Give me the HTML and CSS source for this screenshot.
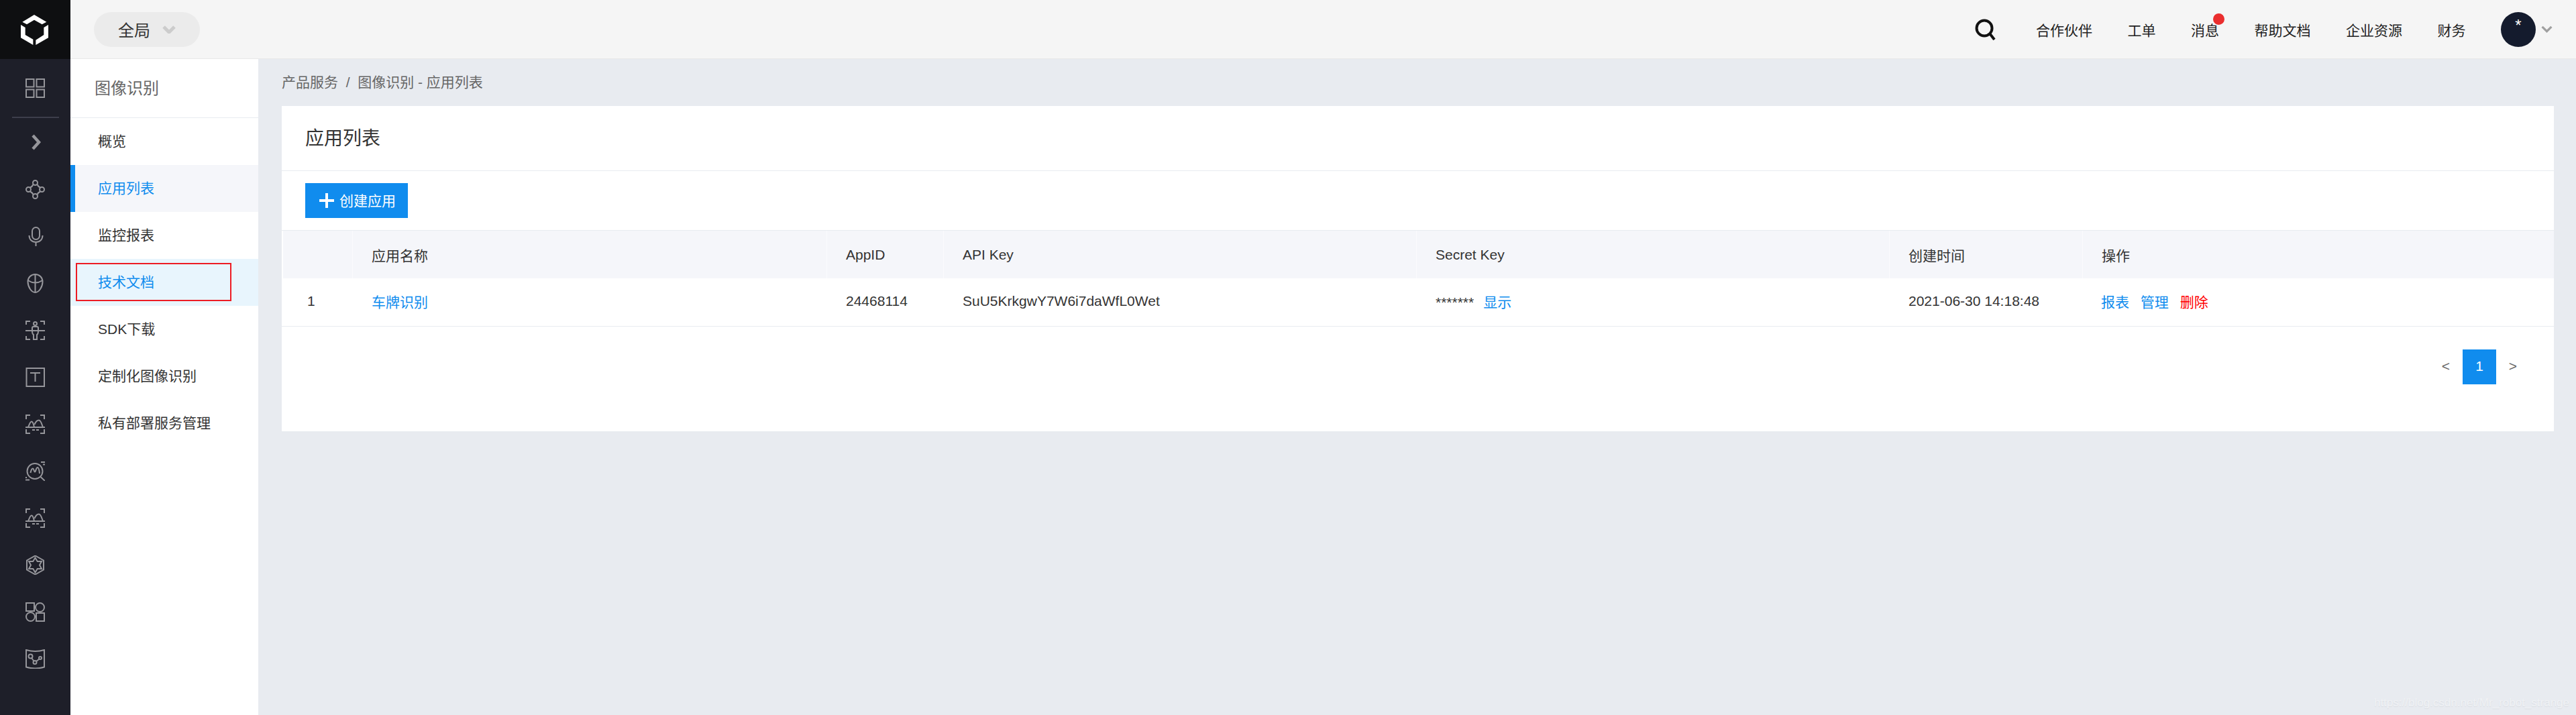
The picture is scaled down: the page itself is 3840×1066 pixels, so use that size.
FILE: index.html
```html
<!DOCTYPE html>
<html lang="zh-CN">
<head>
    <meta charset="utf-8"/>
    <title>图像识别 - 应用列表</title>
    <link rel="stylesheet" href="styles.css">
</head>

<body>
<div class="page">

    <!-- 左侧图标栏 -->
    <aside class="rail">
        <div class="rail-logo">
            <svg class="logo" viewBox="100 65 123 135">
                <polygon points="107,97 160,65 215,97 195,108 160,88 127,108"/>
                <polygon points="100,110 120,122 120,155 155,175 155,200 100,168"/>
                <polygon points="223,110 223,168 167,200 167,178 203,155 203,122"/>
            </svg>
        </div>
        <div class="rail-top">
            <svg class="icon" viewBox="0 0 29 29">
                <rect x="1" y="1" width="11.5" height="11.5"/>
                <rect x="16.5" y="1" width="11.5" height="11.5"/>
                <rect x="1" y="16.5" width="11.5" height="11.5"/>
                <rect x="16.5" y="16.5" width="11.5" height="11.5"/>
            </svg>
        </div>
        <div class="rail-line"></div>
        <div class="rail-arrow">
            <svg class="icon-arrow" viewBox="0 0 14 24">
                <path d="M2 2L11 12L2 22"/>
            </svg>
        </div>
        <div class="rail-item">
            <svg class="icon" viewBox="0 0 29 29">
                <circle cx="14.5" cy="4.5" r="3.5"/>
                <circle cx="4.5" cy="14.5" r="3.5"/>
                <circle cx="24.5" cy="14.5" r="3.5"/>
                <circle cx="14.5" cy="24.5" r="3.5"/>
                <path d="M11.5 7Q10 10.500 7 11.500M17.500 7Q19 10.500 22 11.500M7 17.500Q10 19 11.500 22M22 17.500Q19 19 17.500 22"/>
            </svg>
        </div>
        <div class="rail-item">
            <svg class="icon" viewBox="0 0 29 29">
                <rect x="10" y="1" width="11" height="18" rx="5.500"/>
                <path d="M5.500 13C5.500 19 9.500 23 15.500 23C21.500 23 25.500 19 25.500 13M15.500 23V29"/>
            </svg>
        </div>
        <div class="rail-item">
            <svg class="icon" viewBox="0 0 29 29">
                <path d="M14.500 1C21 1 25.500 6 25.500 12C25.500 20 20 28 14.500 28C9 28 3.500 20 3.500 12C3.500 6 8 1 14.500 1Z"/>
                <path d="M3.500 10Q14.500 17 25.500 10M14.500 1V28"/>
            </svg>
        </div>
        <div class="rail-item">
            <svg class="icon" viewBox="0 0 29 29">
                <path d="M1 6V1H7M22 1H28V6M1 23V28H7M22 28H28V23"/>
                <circle cx="14.500" cy="4.500" r="2.500"/>
                <path d="M0 15H29M10 15V11Q10 9 12 9H17Q19 9 19 11V15M10 15Q10 20 12 21V28H17V21Q19 20 19 15"/>
            </svg>
        </div>
        <div class="rail-item">
            <svg class="icon" viewBox="0 0 29 29">
                <rect x="1.500" y="1" width="26.500" height="27"/>
                <path d="M7 8H22M14.500 8V21"/>
            </svg>
        </div>
        <div class="rail-item">
            <svg class="icon" viewBox="0 0 29 29"><use href="#scan"/></svg>
        </div>
        <div class="rail-item">
            <svg class="icon" viewBox="0 0 29 29">
                <circle cx="14" cy="14.500" r="11.500"/>
                <path d="M22.500 23L29 29M23 1H29M26 4.500H29M0 24H2M0 27.500H6"/>
                <path d="M7.500 17C8.500 12 9.500 10.500 11 10.500C12.500 10.500 12.500 15.500 14 15.500C15.500 15.500 15.500 9 18 9C20 9 20.500 13 21 18"/>
            </svg>
        </div>
        <div class="rail-item">
            <svg class="icon" viewBox="0 0 29 29"><use href="#scan"/></svg>
        </div>
        <div class="rail-item">
            <svg class="icon" viewBox="0 0 29 29">
                <polygon points="14.500,0.500 27,7.500 27,21.500 14.500,28.500 2,21.500 2,7.500"/>
                <polygon points="14.500,3.500 17.750,8.900 24,9 21,14.500 24,20 17.750,20.100 14.500,25.500 11.250,20.100 5,20 8,14.500 5,9 11.250,8.900"/>
            </svg>
        </div>
        <div class="rail-item">
            <svg class="icon" viewBox="0 0 29 29">
                <rect x="1" y="1" width="12" height="12"/>
                <circle cx="21.500" cy="7.500" r="6.500"/>
                <circle cx="7.500" cy="21.500" r="6.500"/>
                <rect x="16" y="16" width="12" height="12"/>
            </svg>
        </div>
        <div class="rail-item">
            <svg class="icon" viewBox="0 0 29 29">
                <path d="M1 1Q14.500 5 28 1V26.500Q14.500 30.500 1 26.500Z"/>
                <circle cx="7.500" cy="10.500" r="3"/>
                <circle cx="14" cy="19.500" r="2.500"/>
                <circle cx="22" cy="13" r="2"/>
                <path d="M9 13L12.500 17.500M16 18L20.500 14.500"/>
            </svg>
        </div>
    </aside>

    <div class="right">
        <header class="topbar">
            <div class="scope">
                <span>全局</span>
                <svg class="scope-arrow" viewBox="0 0 20 12"><path d="M2 2L10 10L18 2"/></svg>
            </div>
            <div class="topnav">
                <svg class="search" viewBox="0 0 33 32">
                    <circle cx="14" cy="14" r="11.500"/>
                    <path d="M22 22L29 31"/>
                </svg>
                <a class="nav-link">合作伙伴</a>
                <a class="nav-link">工单</a>
                <a class="nav-link msg">消息<i class="dot"></i></a>
                <a class="nav-link">帮助文档</a>
                <a class="nav-link">企业资源</a>
                <a class="nav-link">财务</a>
                <div class="user">
                    <div class="avatar">*</div>
                    <svg class="user-arrow" viewBox="0 0 16 10"><path d="M1.500 1.500L8 8L14.500 1.500"/></svg>
                </div>
            </div>
        </header>

        <div class="body">
            <nav class="menu">
                <div class="menu-title">图像识别</div>
                <a class="menu-item">概览</a>
                <a class="menu-item active">应用列表</a>
                <a class="menu-item">监控报表</a>
                <a class="menu-item hover">技术文档<span class="mark"></span></a>
                <a class="menu-item">SDK下载</a>
                <a class="menu-item">定制化图像识别</a>
                <a class="menu-item">私有部署服务管理</a>
            </nav>

            <main class="main">
                <div class="crumb">产品服务&nbsp;&nbsp;/&nbsp;&nbsp;图像识别 - 应用列表</div>
                <section class="card">
                    <h2 class="card-title">应用列表</h2>
                    <div class="toolbar">
                        <button class="btn"><i class="plus"></i><span class="btn-text">创建应用</span></button>
                    </div>
                    <table class="list">
                        <colgroup>
                            <col class="c-no">
                            <col class="c-name">
                            <col class="c-id">
                            <col class="c-key">
                            <col class="c-key">
                            <col class="c-time">
                            <col class="c-op">
                        </colgroup>
                        <thead>
                        <tr>
                            <th></th>
                            <th>应用名称</th>
                            <th>AppID</th>
                            <th>API Key</th>
                            <th>Secret Key</th>
                            <th>创建时间</th>
                            <th>操作</th>
                        </tr>
                        </thead>
                        <tbody>
                        <tr>
                            <td class="no">1</td>
                            <td><a class="link">车牌识别</a></td>
                            <td>24468114</td>
                            <td>SuU5KrkgwY7W6i7daWfL0Wet</td>
                            <td>*******<a class="link show">显示</a></td>
                            <td>2021-06-30 14:18:48</td>
                            <td class="ops">
                                <a class="link">报表</a>
                                <a class="link">管理</a>
                                <a class="del">删除</a>
                            </td>
                        </tr>
                        </tbody>
                    </table>
                    <div class="pager">
                        <span class="page-btn">&lt;</span>
                        <span class="page-btn current">1</span>
                        <span class="page-btn">&gt;</span>
                    </div>
                </section>
            </main>
        </div>
    </div>
</div>

<div class="watermark">https://blog.csdn.net/Mr_robot_strange</div>

<svg class="defs" width="0" height="0">
    <symbol id="scan" viewBox="0 0 29 29">
        <path d="M1 7V1H7M22 1H28V7M0 19H29M1 22V28H7M22 28H28V22M10 23H14M16 23H20"/>
        <path d="M4 19C6 14 7 10.500 9 10.500C11 10.500 12 14 13 19M13.500 15C15 11 17 8.500 20 8.500C23 8.500 24 14 26 19"/>
    </symbol>
</svg>
</body>
</html>
```

FILE: styles.css
```css
* {
    box-sizing: border-box;
}

html, body {
    margin: 0;
    padding: 0;
    height: 100%;
}

body {
    position: relative;
    overflow: hidden;
    font-family: "Liberation Sans", "Noto Sans CJK SC", sans-serif;
    font-size: 21px;
    color: #333;
    background: #e8ebf0;
}

a {
    text-decoration: none;
}

.page {
    display: flex;
    height: 1066px;
}

/* rail */
.rail {
    width: 105px;
    flex: none;
    background: #1e1f29;
}

.rail-logo {
    height: 88px;
    background: #0e0f11;
    display: flex;
    align-items: center;
    justify-content: center;
    padding-right: 3px;
}

.logo {
    width: 41px;
    height: 45px;
    fill: #fff;
}

.rail-top {
    height: 86px;
    display: flex;
    align-items: center;
    justify-content: center;
}

.rail-line {
    height: 2px;
    margin: 0 17px 0 18px;
    background: #3d3e4b;
}

.rail-arrow {
    height: 71px;
    display: flex;
    align-items: center;
    justify-content: center;
    padding-left: 2px;
}

.icon-arrow {
    width: 14px;
    height: 24px;
    fill: none;
    stroke: #96969b;
    stroke-width: 4.500;
}

.rail-item {
    height: 70px;
    display: flex;
    align-items: center;
    justify-content: center;
}

.icon {
    width: 29px;
    height: 29px;
    fill: none;
    stroke: #96969b;
    stroke-width: 2;
}

/* header */
.right {
    flex: 1;
    display: flex;
    flex-direction: column;
    min-width: 0;
}

.topbar {
    height: 88px;
    flex: none;
    display: flex;
    align-items: center;
    justify-content: space-between;
    padding: 0 35px 0 35px;
    background: #f5f5f5;
    border-bottom: 1px solid #e8e8e8;
}

.scope {
    width: 158px;
    height: 52px;
    border-radius: 26px;
    background: #ebebeb;
    display: flex;
    align-items: center;
    padding-left: 36px;
    font-size: 24px;
}

.scope-arrow {
    width: 20px;
    height: 12px;
    margin-left: 18px;
    fill: none;
    stroke: #ccc;
    stroke-width: 5;
}

.topnav {
    display: flex;
    align-items: center;
    gap: 52.500px;
    color: #111;
}

.search {
    width: 33px;
    height: 32px;
    margin-right: 6px;
    fill: none;
    stroke: #111;
    stroke-width: 4;
}

.nav-link {
    color: #222;
    position: relative;
}

.dot {
    position: absolute;
    left: 33px;
    top: -9px;
    width: 17px;
    height: 17px;
    border-radius: 50%;
    background: #ea2e2e;
}

.user {
    display: flex;
    align-items: center;
    gap: 8px;
}

.avatar {
    width: 52px;
    height: 52px;
    border-radius: 50%;
    background: #141b2d;
    color: #fff;
    font-size: 24px;
    line-height: 40px;
    text-align: center;
}

.user-arrow {
    width: 17px;
    height: 11px;
    fill: none;
    stroke: #a0a0a0;
    stroke-width: 3;
}

/* menu */
.body {
    flex: 1;
    display: flex;
    min-height: 0;
}

.menu {
    width: 280px;
    flex: none;
    background: #fff;
}

.menu-title {
    height: 88px;
    padding: 0 0 0 36px;
    line-height: 88px;
    font-size: 24px;
    color: #666;
    border-bottom: 1px solid #e8ebf0;
}

.menu-item {
    display: block;
    position: relative;
    height: 70px;
    line-height: 70px;
    padding-left: 41px;
    color: #333;
}

.menu-item.active {
    color: #108cee;
    background: #f5f6fa;
    border-left: 7px solid #108cee;
    padding-left: 34px;
}

.menu-item.hover {
    color: #108cee;
    background: #e8f5fd;
}

.mark {
    position: absolute;
    left: 8px;
    top: 6px;
    width: 232px;
    height: 57px;
    border: 2px solid #ed1c24;
}

/* content */
.main {
    flex: 1;
    min-width: 0;
    padding: 0 33px 0 35px;
}

.crumb {
    height: 70px;
    line-height: 70px;
    color: #666;
}

.card {
    height: 485px;
    background: #fff;
}

.card-title {
    margin: 0;
    height: 97px;
    padding-left: 35px;
    line-height: 98px;
    font-size: 28px;
    font-weight: normal;
    border-bottom: 1px solid #e8ebf0;
}

.toolbar {
    padding: 18px 35px;
}

.btn {
    display: flex;
    align-items: center;
    width: 153px;
    height: 52px;
    padding: 0 0 0 21px;
    border: 0;
    background: #108cee;
    color: #fff;
    font: inherit;
}

.btn-text {
    margin-bottom: 3px;
}

.plus {
    position: relative;
    width: 22px;
    height: 22px;
    margin-right: 8px;
    background:
        linear-gradient(#fff, #fff) center / 100% 4px no-repeat,
        linear-gradient(#fff, #fff) center / 4px 100% no-repeat;
}

.list {
    width: 100%;
    table-layout: fixed;
    border-collapse: separate;
    border-spacing: 0;
    border-top: 1px solid #e8ebf0;
}

.c-no { width: 105px; }
.c-name { width: 707px; }
.c-id { width: 174px; }
.c-key { width: 705px; }
.c-time { width: 288px; }

.list th {
    height: 71px;
    padding: 0 0 0 28px;
    background: #f5f6fa;
    border-left: 1px solid #fbfbfd;
    font-weight: normal;
    text-align: left;
}

.list th:first-child {
    border-left: 2px solid #fff;
}

.list td {
    height: 72px;
    padding: 0 0 3px 29px;
    border-bottom: 1px solid #e8ebf0;
}

.list td.no {
    padding-left: 38px;
}

.list td.ops {
    padding-left: 28px;
}

.link {
    color: #108cee;
}

.show {
    margin-left: 14px;
}

.ops a {
    margin-right: 11px;
}

.del {
    color: #f00;
}

.pager {
    display: flex;
    justify-content: flex-end;
    padding: 34px 36px 0 0;
}

.page-btn {
    width: 50px;
    height: 52px;
    line-height: 50px;
    text-align: center;
    color: #666;
}

.page-btn.current {
    background: #108cee;
    color: #fff;
}

.watermark {
    position: absolute;
    right: 10px;
    bottom: 8px;
    font-size: 17px;
    color: #f0f2f5;
    text-shadow: 0 1px 1px #d8dbe0;
}

.defs {
    position: absolute;
}
```
